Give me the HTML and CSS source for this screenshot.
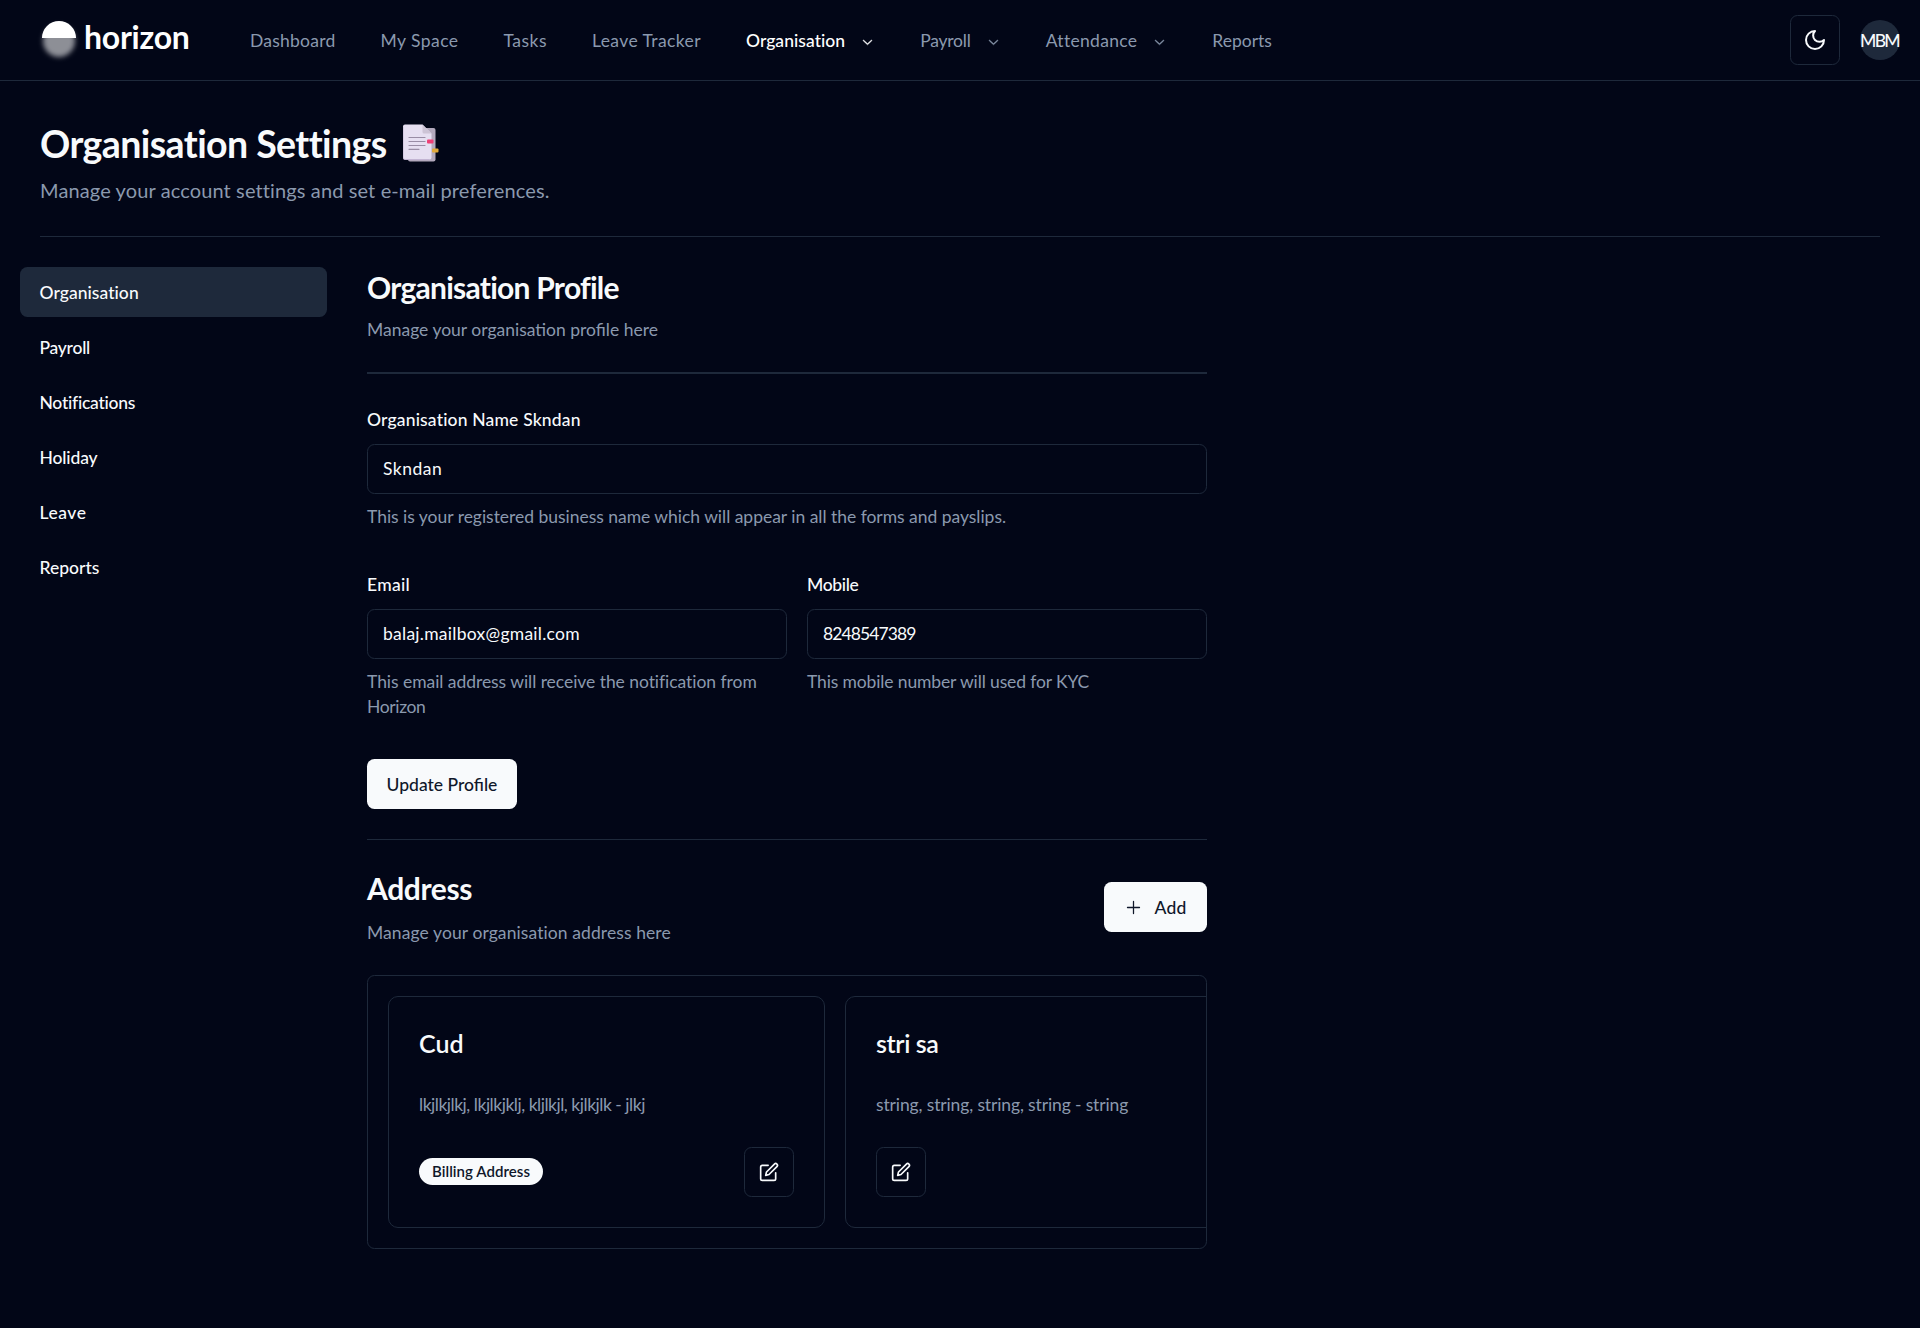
FILE: index.html
```html
<!DOCTYPE html>
<html lang="en">
<head>
<meta charset="utf-8">
<title>Organisation Settings</title>
<link rel="stylesheet" href="styles.css">
</head>
<body>
<svg class="sprite" aria-hidden="true">
  <symbol id="chevron" viewBox="0 0 15 15"><path fill="currentColor" stroke="currentColor" stroke-width=".4" fill-rule="evenodd" d="M3.135 6.158a.5.5 0 0 1 .707-.023L7.5 9.565l3.658-3.43a.5.5 0 0 1 .684.73l-4 3.75a.5.5 0 0 1-.684 0l-4-3.750a.5.5 0 0 1-.023-.707Z"/></symbol>
  <symbol id="edit" viewBox="0 0 24 24"><g fill="none" stroke="currentColor" stroke-width="2" stroke-linecap="round" stroke-linejoin="round"><path d="M11 4H4a2 2 0 0 0-2 2v14a2 2 0 0 0 2 2h14a2 2 0 0 0 2-2v-7"/><path d="M18.5 2.5a2.121 2.121 0 0 1 3 3L12 15l-4 1 1-4 9.500-9.500z"/></g></symbol>
</svg>
<header class="topbar">
  <a class="logo">
    <svg class="logo-mark" viewBox="0 0 54 54" width="54" height="54">
      <defs><filter id="glow" x="-40%" y="-40%" width="180%" height="180%"><feGaussianBlur stdDeviation="2.6"/></filter></defs>
      <circle cx="27" cy="30" r="16" fill="#fff" fill-opacity=".55" filter="url(#glow)"/>
      <path d="M10 27a17 17 0 0 1 34 0z" fill="#fff"/>
    </svg>
    <span class="logo-text">horizon</span>
  </a>
  <nav class="nav">
    <a class="nav-dashboard">Dashboard</a>
    <a class="nav-space">My Space</a>
    <a class="nav-tasks">Tasks</a>
    <a class="nav-leave">Leave Tracker</a>
    <a class="nav-org active">Organisation<svg class="chev"><use href="#chevron"/></svg></a>
    <a class="nav-payroll">Payroll<svg class="chev"><use href="#chevron"/></svg></a>
    <a class="nav-attendance">Attendance<svg class="chev"><use href="#chevron"/></svg></a>
    <a class="nav-reports">Reports</a>
  </nav>
  <div class="actions">
    <button class="icon-btn"><svg viewBox="0 0 24 24" width="24" height="24" fill="none" stroke="currentColor" stroke-width="2" stroke-linecap="round" stroke-linejoin="round"><path d="M12 3a6 6 0 0 0 9 9 9 9 0 1 1-9-9Z"/></svg></button>
    <span class="avatar">MBM</span>
  </div>
</header>

<section class="page-head">
  <h1><span class="title">Organisation Settings</span>
    <svg class="emoji" viewBox="0 0 36 38" width="36" height="38">
      <path d="M6 4h24.500a2 2 0 0 1 2 2v29.500a2 2 0 0 1-2 2H7a2 2 0 0 1-2-2z" fill="#b3a9bd"/>
      <path d="M2 0.500h17.500l9 9V33.500a2 2 0 0 1-2 2H2a2 2 0 0 1-2-2v-31a2 2 0 0 1 2-2z" fill="#e6dff1"/>
      <path d="M0 3v30.500a2 2 0 0 0 2 2h24.500" fill="none" stroke="#c3b5d3"/>
      <path d="M19.500.5l9 9h-7.500a1.500 1.500 0 0 1-1.500-1.500z" fill="#cdc4d6"/>
      <path d="M6 13.500h16M6 17.500h16M6 21.500h16M6 25.300h10" stroke="#998da5" stroke-width="1.200" stroke-linecap="round"/>
      <rect x="24" y="15.500" width="6.500" height="4" rx="1" fill="#ee3f76"/>
      <rect x="29" y="24.500" width="6.500" height="4" rx="1" fill="#e0a93a"/>
    </svg>
  </h1>
  <p class="lead">Manage your account settings and set e-mail preferences.</p>
</section>

<div class="layout">
  <aside class="sidebar">
    <a class="side-org selected">Organisation</a>
    <a class="side-payroll">Payroll</a>
    <a class="side-notifications">Notifications</a>
    <a class="side-holiday">Holiday</a>
    <a class="side-leave">Leave</a>
    <a class="side-reports">Reports</a>
  </aside>

  <main class="content">
    <div class="profile-head">
      <h2 class="profile-title">Organisation Profile</h2>
      <p class="hint">Manage your organisation profile here</p>
    </div>

    <form class="profile">
      <div class="field">
        <label class="label-name">Organisation Name Skndan</label>
        <div class="input input-name">Skndan</div>
        <p class="hint hint-name">This is your registered business name which will appear in all the forms and payslips.</p>
      </div>
      <div class="field-row">
        <div class="field">
          <label class="label-email">Email</label>
          <div class="input input-email">balaj.mailbox@gmail.com</div>
          <p class="hint hint-email">This email address will receive the notification from <span class="hint-horizon">Horizon</span></p>
        </div>
        <div class="field">
          <label class="label-mobile">Mobile</label>
          <div class="input input-mobile">8248547389</div>
          <p class="hint hint-mobile">This mobile number will used for KYC</p>
        </div>
      </div>
      <button type="button" class="btn">Update Profile</button>
    </form>

    <section class="address">
      <div class="address-head">
        <div>
          <h2 class="address-title">Address</h2>
          <p class="hint hint-address">Manage your organisation address here</p>
        </div>
        <button class="btn btn-add"><svg viewBox="0 0 15 15" width="19" height="19"><path fill="currentColor" d="M8 2.750a.5.5 0 0 0-1 0V7H2.750a.5.5 0 0 0 0 1H7v4.250a.5.5 0 0 0 1 0V8h4.250a.5.5 0 0 0 0-1H8z"/></svg><span class="add-text">Add</span></button>
      </div>
      <div class="cards">
        <article class="card">
          <h3 class="name-cud">Cud</h3>
          <p class="hint hint-cud">lkjlkjlkj, lkjlkjklj, kljlkjl, kjlkjlk - jlkj</p>
          <div class="card-foot">
            <span class="badge">Billing Address</span>
            <button class="icon-btn"><svg width="20" height="20"><use href="#edit"/></svg></button>
          </div>
        </article>
        <article class="card">
          <h3 class="name-stri">stri sa</h3>
          <p class="hint hint-stri">string, string, string, string - string</p>
          <div class="card-foot">
            <button class="icon-btn"><svg width="20" height="20"><use href="#edit"/></svg></button>
          </div>
        </article>
      </div>
    </section>
  </main>
</div>
</body>
</html>
```
FILE: styles.css
```css
:root {
  --bg: #020617;
  --fg: #f8fafc;
  --muted: #8b99ae;
  --line: #1e293b;
}
* { box-sizing: border-box; margin: 0; padding: 0; }
body {
  min-height: 1328px;
  background: var(--bg);
  color: var(--fg);
  font: 400 17.5px/25px Lato, "Open Sans", sans-serif;
}
.sprite { display: none; }
svg { display: block; flex: none; }
button { font: inherit; color: inherit; background: none; border: 0; }

/* Top bar */
.topbar {
  display: flex;
  align-items: center;
  height: 81px;
  padding: 0 20px 0 32px;
  border-bottom: 1px solid var(--line);
}
.logo { display: flex; align-items: center; width: 218px; }
.logo-mark { margin-top: -5px; }
.logo-text {
  margin: -7px 0 0 -2px;
  font-size: 32px;
  font-weight: 700;
  line-height: 32px;
  letter-spacing: -.25px;
  color: #fff;
}
.nav { display: flex; gap: 45px; padding-top: 1px; color: var(--muted); }
.nav a { display: flex; align-items: center; white-space: nowrap; }
.nav .active { color: #fff; font-weight: 500; }
.chev { width: 15px; height: 15px; margin: 1px 0 0 15px; }
.nav-dashboard { letter-spacing: .24px; }
.nav-space { letter-spacing: .45px; }
.nav-tasks { letter-spacing: .48px; }
.nav-leave { letter-spacing: .4px; }
.nav-org { letter-spacing: .05px; }
.nav-payroll { letter-spacing: -.21px; }
.nav-attendance { letter-spacing: .31px; }
.actions { display: flex; align-items: center; gap: 20px; margin-left: auto; }
.icon-btn {
  display: grid;
  place-items: center;
  width: 50px;
  height: 50px;
  border: 1px solid var(--line);
  border-radius: 7.5px;
}
.avatar {
  display: flex;
  align-items: center;
  justify-content: center;
  width: 40px;
  height: 40px;
  padding-right: 1px;
  border-radius: 50%;
  background: var(--line);
  font-weight: 500;
  letter-spacing: -1.67px;
}

/* Page heading */
.page-head {
  height: 156px;
  margin: 0 40px;
  padding-top: 40px;
  border-bottom: 1px solid var(--line);
}
h1 { display: flex; gap: 16px; height: 45px; font-size: 37.5px; line-height: 45px; }
.title { letter-spacing: -.59px; }
.emoji { margin-top: 3px; }
.lead { margin-top: 9px; font-size: 20px; line-height: 30px; letter-spacing: .12px; color: var(--muted); }

/* Two-column area */
.layout { display: flex; gap: 40px; padding: 30px 20px 0; }
.sidebar { display: flex; flex-direction: column; gap: 5px; width: 307px; font-weight: 500; }
.sidebar a { height: 50px; padding: 13px 19.5px; border-radius: 7.5px; }
.sidebar .selected { background: var(--line); }
.side-org { letter-spacing: .05px; }
.side-payroll { letter-spacing: -.26px; }
.side-notifications { letter-spacing: -.25px; }
.side-holiday { letter-spacing: -.14px; }
.side-leave { letter-spacing: .53px; }

.content { width: 840px; }
.hint { color: var(--muted); }
h2 { font-size: 30px; line-height: 37.5px; }
.profile-title { letter-spacing: -.75px; }
.profile-head {
  height: 107px;
  padding-top: 2px;
  border-bottom: 2px solid var(--line);
}
.profile-head .hint { margin-top: 10.5px; }

/* Profile form */
.profile { height: 466px; padding-top: 33px; border-bottom: 1px solid var(--line); }
.field label { display: block; margin-bottom: 12px; font-weight: 500; }
.input {
  height: 50px;
  padding: 11px 15px;
  border: 1px solid var(--line);
  border-radius: 7.5px;
}
.field .hint { margin-top: 10px; }
.field-row { display: grid; grid-template-columns: 420px 400px; gap: 20px; margin-top: 43px; }
.label-name { letter-spacing: .17px; }
.label-email { letter-spacing: .29px; }
.label-mobile { letter-spacing: -.34px; }
.input-name { letter-spacing: .5px; }
.input-email { letter-spacing: .26px; }
.input-mobile { letter-spacing: -.9px; }
.hint-name { letter-spacing: -.025px; }
.hint-email { letter-spacing: -.05px; }
.hint-horizon { display: block; letter-spacing: -.36px; }
.hint-mobile { letter-spacing: -.13px; }
.btn {
  display: flex;
  align-items: center;
  justify-content: center;
  width: 150px;
  height: 50px;
  border-radius: 7.5px;
  background: var(--fg);
  color: #0f172a;
  font-weight: 500;
}
.profile .btn { margin-top: 40px; }

/* Addresses */
.address-head { display: flex; justify-content: space-between; height: 135px; padding-top: 30px; }
.address-title { letter-spacing: -.39px; }
.hint-address { margin-top: 12px; letter-spacing: .09px; }
.btn-add { width: 103px; gap: 11px; margin-top: 12px; }
.add-text { letter-spacing: .2px; }
.cards {
  display: flex;
  gap: 20px;
  height: 274px;
  padding: 20px;
  overflow: hidden;
  border: 1px solid var(--line);
  border-radius: 7.5px;
}
.card {
  flex: none;
  width: 437px;
  height: 232px;
  padding: 34px 30px 30px;
  border: 1px solid var(--line);
  border-radius: 10px;
}
h3 { font-size: 25px; font-weight: 600; line-height: 25px; }
.card .hint { margin-top: 36px; }
.card-foot { display: flex; align-items: center; justify-content: space-between; height: 50px; margin-top: 30px; }
.badge {
  width: 124px;
  height: 27px;
  margin-top: -1px;
  border-radius: 14px;
  background: var(--fg);
  color: #0f172a;
  font-size: 15px;
  font-weight: 600;
  line-height: 27px;
  text-align: center;
  letter-spacing: .05px;
}
.name-stri { letter-spacing: -.38px; }
.hint-cud { letter-spacing: -.48px; }
.hint-stri { letter-spacing: -.13px; }
```
